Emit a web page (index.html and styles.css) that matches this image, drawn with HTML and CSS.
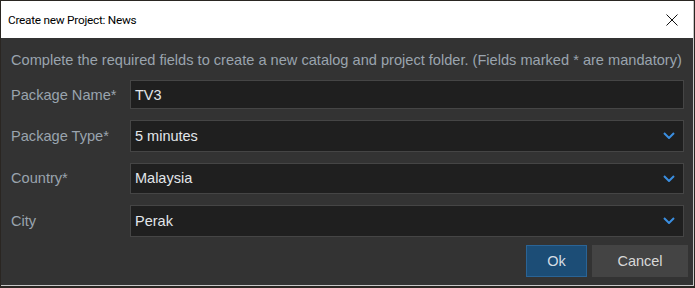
FILE: index.html
```html
<!DOCTYPE html>
<html>
<head>
<meta charset="utf-8">
<link rel="stylesheet" href="styles.css">
</head>
<body>
<div class="window">
  <div class="titlebar">
    <span class="title">Create new Project: News</span>
    <svg class="close" width="12" height="12" viewBox="0 0 12 12"><path d="M0.5 0.5 L11.5 11.5 M11.5 0.5 L0.5 11.5" stroke="#111" stroke-width="1" fill="none"/></svg>
  </div>
  <div class="content">
    <p class="desc">Complete the required fields to create a new catalog and project folder. (Fields marked * are mandatory)</p>
    <div class="form">
      <label class="label">Package Name*</label>
      <div class="field text">TV3</div>
      <label class="label">Package Type*</label>
      <div class="field select"><span>5 minutes</span><svg class="chev" width="12" height="7" viewBox="0 0 12 7"><path d="M1 1 L6 6 L11 1" stroke="#3a8ee0" stroke-width="2" fill="none"/></svg></div>
      <label class="label">Country*</label>
      <div class="field select"><span>Malaysia</span><svg class="chev" width="12" height="7" viewBox="0 0 12 7"><path d="M1 1 L6 6 L11 1" stroke="#3a8ee0" stroke-width="2" fill="none"/></svg></div>
      <label class="label">City</label>
      <div class="field select"><span>Perak</span><svg class="chev" width="12" height="7" viewBox="0 0 12 7"><path d="M1 1 L6 6 L11 1" stroke="#3a8ee0" stroke-width="2" fill="none"/></svg></div>
    </div>
    <div class="buttons">
      <button class="btn ok">Ok</button>
      <button class="btn cancel">Cancel</button>
    </div>
  </div>
</div>
</body>
</html>
```
FILE: styles.css
```css
html, body {
  margin: 0;
  padding: 0;
  background: #2a2622;
  width: 695px;
  height: 288px;
  overflow: hidden;
}
body {
  padding: 1px 0 0 1px;
  box-sizing: border-box;
}
.window {
  width: 693px;
  height: 285px;
  box-sizing: border-box;
  border-right: 1px solid #c8c8c8;
  border-bottom: 1px solid #c8c8c8;
  background: #333333;
  display: flex;
  flex-direction: column;
}
.titlebar {
  height: 37px;
  background: #ffffff;
  display: flex;
  align-items: center;
  justify-content: space-between;
  padding: 0 15px 0 7px;
  flex-shrink: 0;
}
.title {
  font-family: Roboto, "Noto Sans", sans-serif;
  font-size: 11.8px;
  letter-spacing: -0.25px;
  color: #000;
}
.close {
  display: block;
}
.content {
  display: flex;
  flex-direction: column;
  padding: 0 5px 0 10px;
  font-family: "Liberation Sans", Arial, sans-serif;
}
.desc {
  margin: 12px 0 0 0;
  height: 20px;
  line-height: 20px;
  font-size: 14.6px;
  color: #9aa4ae;
  white-space: nowrap;
}
.form {
  margin-top: 10px;
  margin-right: 4px;
  display: grid;
  grid-template-columns: 119px 1fr;
  grid-template-rows: 29px 31.5px 31.5px 31.5px;
  row-gap: 11px;
}
.label {
  display: flex;
  align-items: center;
  font-size: 14.6px;
  color: #9aa4ae;
}
.field {
  box-sizing: border-box;
  background: #1f1f1f;
  border: 1px solid #454545;
  display: flex;
  align-items: center;
  justify-content: space-between;
  padding: 0 8px 0 4px;
  font-size: 14.5px;
  color: #e2e6ea;
}
.chev {
  display: block;
}
.buttons {
  margin-top: 8px;
  display: flex;
  justify-content: flex-end;
  gap: 5px;
}
.btn {
  height: 32px;
  font-family: "Liberation Sans", Arial, sans-serif;
  font-size: 14.5px;
  box-sizing: border-box;
  padding: 0;
}
.ok {
  width: 61px;
  background: #1c4d76;
  border: 1px solid #2a6496;
  color: #d6dde4;
}
.cancel {
  width: 96px;
  background: #444444;
  border: none;
  color: #d8d8d8;
}
```
